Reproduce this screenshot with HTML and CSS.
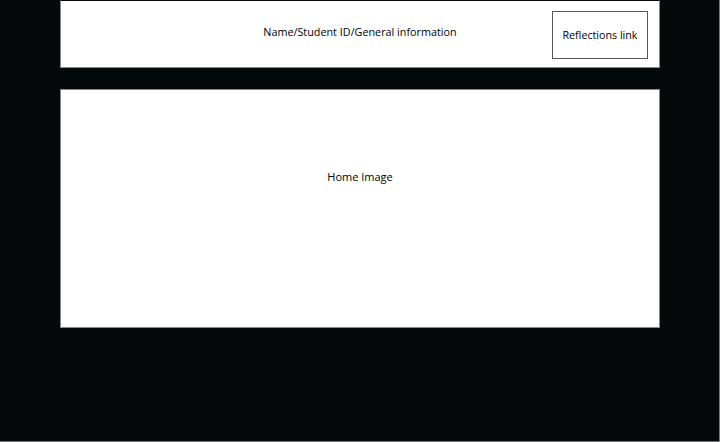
FILE: index.html
```html
<!DOCTYPE html>
<html>
<head>
<meta charset="utf-8">
<link rel="stylesheet" href="styles.css">
</head>
<body>
<div class="frame">
  <header class="panel header">
    <div class="info">Name/Student ID/General information</div>
    <a class="reflect">Reflections link</a>
  </header>
  <section class="panel hero">
    <div class="hero-text">Home Image</div>
  </section>
</div>
</body>
</html>
```

FILE: styles.css
```css
html, body {
  margin: 0;
  padding: 0;
  background: #05090a;
}
.frame {
  width: 720px;
  height: 442px;
  box-sizing: border-box;
  border-right: 1px solid #777;
  border-bottom: 1px solid #777;
  padding: 0 60px;
  display: flex;
  flex-direction: column;
  gap: 21px;
  font-family: "Open Sans", "Liberation Sans", sans-serif;
  font-size: 11px;
  color: #000;
}
.panel {
  background: #fff;
  box-sizing: border-box;
  border: 1px solid #8a8a8a;
  width: 600px;
}
.header {
  height: 68px;
  border-top-color: #05090a;
  position: relative;
  display: flex;
  align-items: center;
  justify-content: center;
}
.info {
  margin-top: -5px;
  font-size: 10.8px;
}
.reflect {
  position: absolute;
  left: 491px;
  top: 10px;
  width: 96px;
  height: 48px;
  box-sizing: border-box;
  border: 1px solid #555;
  display: flex;
  align-items: center;
  justify-content: center;
  padding-bottom: 1px;
  font-size: 10.7px;
}
.hero {
  height: 239px;
  display: flex;
  justify-content: center;
  padding-top: 79px;
}
```
